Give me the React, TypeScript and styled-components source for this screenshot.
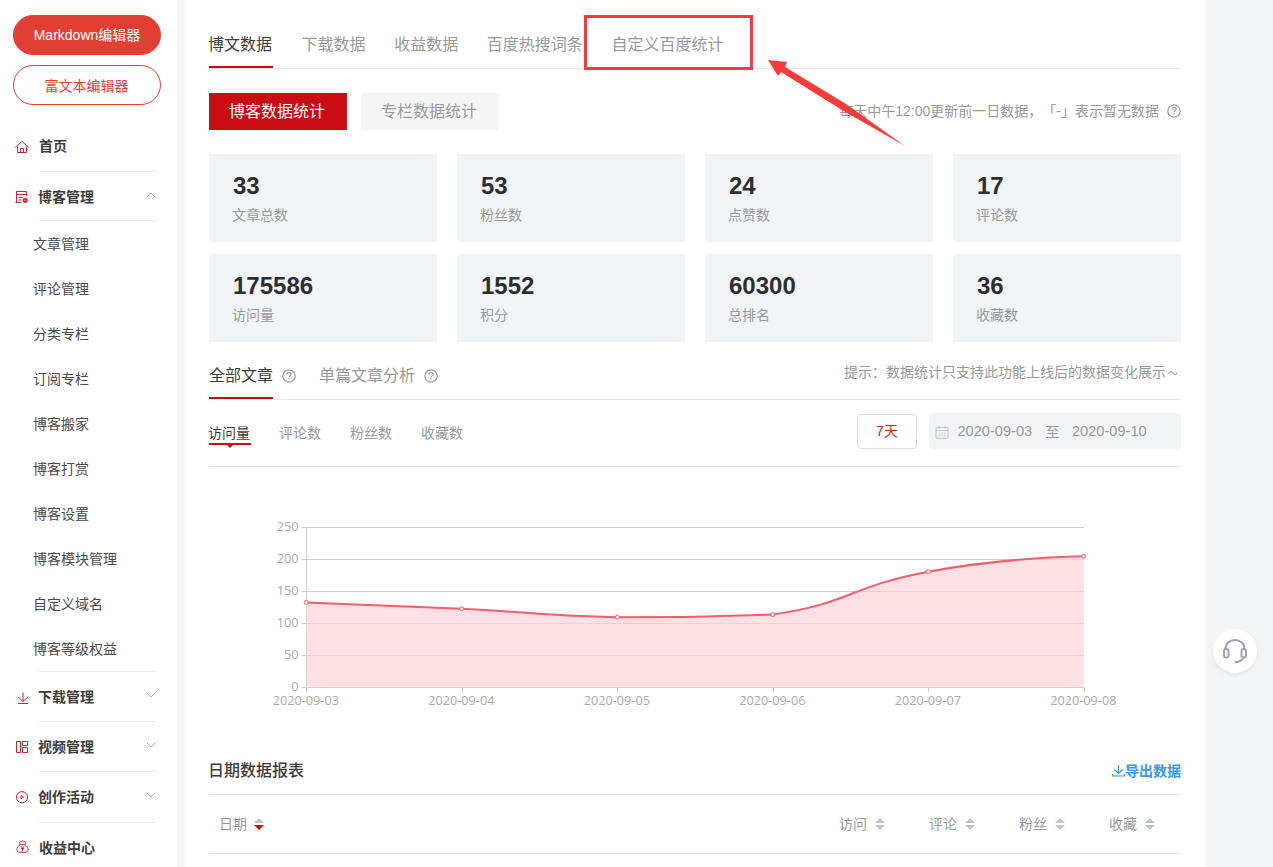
import React from "react";
import styled, { createGlobalStyle } from "styled-components";

const GlobalStyle = createGlobalStyle`
  * { box-sizing: border-box; }
  html, body { margin: 0; height: 100%; overflow: hidden; }
  body {
    background: #f4f5f7;
    color: #3d3d3d;
    font-family: "Liberation Sans", "Noto Sans CJK SC", sans-serif;
    font-size: 14px;
    text-spacing-trim: space-all;
  }
`;

const Page = styled.div`
  position: relative;
  display: flex;
  gap: 8px;
  width: 1273px;
  height: 867px;
  overflow: hidden;
  background: #f4f5f7;
`;

const Sidebar = styled.aside`
  display: flex;
  flex-direction: column;
  flex: none;
  width: 177px;
  padding-top: 15px;
  background: #fff;
`;

const EditorButtons = styled.div`
  display: flex;
  flex-direction: column;
  gap: 10px;
  padding: 0 16px 0 13px;
  margin-bottom: 16px;
`;

const EditorButton = styled.button<{ $filled?: boolean }>`
  height: 40px;
  padding: ${(p) => (p.$filled ? "0" : "1px 1px 0 0")};
  border: 1px solid #e33e33;
  border-radius: 20px;
  background: ${(p) => (p.$filled ? "#e33e33" : "#fff")};
  color: ${(p) => (p.$filled ? "#fff" : "#e33e33")};
  font: 14px/38px "Liberation Sans", "Noto Sans CJK SC", sans-serif;
`;

const MenuRow = styled.div<{ $height: number; $shift?: number }>`
  display: flex;
  flex: none;
  align-items: center;
  height: ${(p) => p.$height}px;
  padding-left: ${(p) => 14 + (p.$shift || 0)}px;
  padding-right: 21px;
`;

const MenuIcon = styled.svg`
  flex: none;
  width: 16px;
  height: 16px;
  margin-left: -1px;
  fill: none;
  stroke: #c9202c;
  stroke-width: 1;
`;

const MenuBody = styled.div<{ $line?: boolean }>`
  display: flex;
  flex: 1;
  align-items: center;
  justify-content: space-between;
  height: 100%;
  margin-left: 10px;
  border-bottom: 1px solid ${(p) => (p.$line === false ? "transparent" : "#ebebeb")};
  font-weight: bold;
  color: #3d3d3d;
  white-space: nowrap;
`;

const MenuLabel = styled.span<{ $raise?: number }>`
  margin-left: -1px;
  padding-bottom: ${(p) => p.$raise || 0}px;
`;

const Chevron = styled.svg<{ $up?: boolean }>`
  width: 10px;
  height: 6px;
  margin-top: ${(p) => (p.$up ? "-2px" : "-4px")};
  fill: none;
  stroke: ${(p) => (p.$up ? "#8fa5bb" : "#a9adb5")};
  transform: ${(p) => (p.$up ? "none" : "rotate(180deg)")};
`;

const SubMenu = styled.div`
  flex: none;
  padding-left: 33px;
`;

const SubItem = styled.div`
  height: 45px;
  line-height: 47px;
  color: #4a4a4a;
`;

const SubMenuEnd = styled.div`
  flex: none;
  height: 1px;
  margin: 0 21px 0 39px;
  background: #ebebeb;
`;

const Main = styled.main`
  display: flex;
  flex-direction: column;
  flex: none;
  width: 1020px;
  padding: 20px 24px 0;
  background: #fff;
`;

const TabBar = styled.div`
  display: flex;
  flex: none;
  gap: 28.6px;
  height: 49px;
  border-bottom: 1px solid #e8e8ea;
`;

const Tab = styled.div<{ $active?: boolean }>`
  height: 48px;
  line-height: 49px;
  font-size: 16px;
  text-indent: ${(p) => (p.$active ? "-1px" : "0")};
  padding-right: ${(p) => (p.$active ? "1px" : "0")};
  color: ${(p) => (p.$active ? "#3d3d3d" : "#999")};
  border-bottom: 2px solid ${(p) => (p.$active ? "#c90d15" : "transparent")};
  white-space: nowrap;
`;

const ModeRow = styled.div`
  display: flex;
  flex: none;
  align-items: center;
  gap: 14px;
  height: 37px;
  margin: 24px 0;
`;

const ModeButton = styled.button<{ $active?: boolean }>`
  width: 138px;
  height: 37px;
  padding: 0 2px 2px 0;
  border: 0;
  background: ${(p) => (p.$active ? "#c90d15" : "#f5f5f6")};
  color: ${(p) => (p.$active ? "#fff" : "#999")};
  font: 16px/35px "Noto Sans CJK SC", sans-serif;
`;

const Note = styled.div`
  display: flex;
  align-items: center;
  gap: 8px;
  margin-left: auto;
  padding-bottom: 1px;
  color: #999;
  line-height: 20px;
  white-space: nowrap;
`;

const Cards = styled.div`
  display: grid;
  flex: none;
  grid-template-columns: repeat(4, 228px);
  grid-auto-rows: 88px;
  gap: 12px 20px;
`;

const Card = styled.div`
  padding: 18px 24px 0;
  background: #f0f4f7;
`;

const CardValue = styled.div`
  height: 28px;
  line-height: 28px;
  font-size: 24px;
  font-weight: bold;
  color: #2e2e2e;
`;

const CardLabel = styled.div`
  height: 30px;
  line-height: 30px;
  text-indent: -1px;
  color: #999;
`;

const ScopeBar = styled.div`
  display: flex;
  flex: none;
  align-items: flex-start;
  height: 58px;
  border-bottom: 1px solid #e8e8ea;
`;

const ScopeTab = styled.div<{ $active?: boolean }>`
  height: 57px;
  padding-top: 10px;
  line-height: 48px;
  font-size: 16px;
  color: ${(p) => (p.$active ? "#3d3d3d" : "#999")};
  border-bottom: 2px solid ${(p) => (p.$active ? "#c90d15" : "transparent")};
`;

const HelpSlot = styled.div`
  display: flex;
  align-items: center;
  height: 68px;
  margin: 0 23px 0 9px;
`;

const ScopeHint = styled.div`
  margin-left: auto;
  padding: 20px 1px 0 0;
  line-height: 20px;
  color: #999;
`;

const Tilde = styled.span`
  display: inline-block;
  width: 14px;
  text-align: center;
  font-size: 10px;
`;

const MetricBar = styled.div`
  display: flex;
  flex: none;
  align-items: flex-start;
  height: 67px;
  padding-top: 13px;
  border-bottom: 1px solid #e8e8ea;
`;

const Metric = styled.div<{ $active?: boolean }>`
  position: relative;
  height: 32px;
  margin-right: 29px;
  padding: 6px 1px 0 0;
  text-indent: -1px;
  line-height: 28px;
  color: ${(p) => (p.$active ? "#3d3d3d" : "#999")};
  border-bottom: 2px solid ${(p) => (p.$active ? "#c90d15" : "transparent")};
`;

const MetricPointer = styled.span`
  position: absolute;
  left: 17px;
  top: 31px;
  border: 4px solid transparent;
  border-top-color: #c90d15;
  border-bottom: 0;
`;

const RangeButton = styled.button`
  width: 60px;
  height: 35px;
  margin: 1px 12px 0 auto;
  padding: 0 0 1px;
  border: 1px solid #dcdee2;
  border-radius: 4px;
  background: #fff;
  color: #ca1b23;
  font: 14px/30px "Liberation Sans", "Noto Sans CJK SC", sans-serif;
`;

const DateRange = styled.div`
  display: flex;
  align-items: center;
  width: 252px;
  height: 36px;
  padding-left: 6px;
  border-radius: 4px;
  background: #f2f4f6;
  color: #999;
  font-size: 14.6px;
  white-space: nowrap;
`;

const DateText = styled.span`
  width: 75px;
  margin-left: 8.5px;
`;

const DateJoin = styled.span`
  margin: 0 4px 0 13px;
  padding-bottom: 1px;
  font-size: 14px;
`;

const CalendarIcon = styled.svg`
  width: 14px;
  height: 14px;
  margin-top: 1px;
  fill: none;
  stroke: #c0c4cc;
`;

const ChartSvg = styled.svg`
  display: block;
  flex: none;
  width: 972px;
  height: 280px;
`;

const AxisText = styled.text`
  font-family: "Open Sans", sans-serif;
  font-size: 12.7px;
  fill: #aaa;
`;

const ReportHead = styled.div`
  display: flex;
  flex: none;
  align-items: center;
  justify-content: space-between;
  height: 48px;
  border-bottom: 1px solid #e8e8ea;
`;

const ReportTitle = styled.div`
  font-size: 16px;
  font-weight: 500;
  line-height: 24px;
  text-indent: -1px;
  color: #3d3d3d;
`;

const ExportLink = styled.a`
  display: flex;
  align-items: center;
  line-height: 20px;
  font-weight: bold;
  color: #3399ea;
`;

const TableHead = styled.div`
  display: flex;
  flex: none;
  height: 59px;
  padding-left: 10px;
  border-bottom: 1px solid #e8e8ea;
  color: #999;
`;

const Column = styled.div<{ $grow?: boolean }>`
  display: flex;
  flex: ${(p) => (p.$grow ? "1" : "none")};
  align-items: center;
  gap: ${(p) => (p.$grow ? "7px" : "8px")};
  width: 90px;
  padding-bottom: 3px;
  &:last-child { width: 72px; }
`;

const SortArrows = styled.svg`
  width: 10px;
  height: 12px;
  margin-top: 2px;
`;

const Support = styled.div`
  position: absolute;
  left: 1213px;
  top: 629px;
  display: flex;
  align-items: center;
  justify-content: center;
  width: 44px;
  height: 44px;
  border-radius: 50%;
  background: #fff;
  box-shadow: 0 2px 5px rgba(0, 0, 0, 0.07);
`;

const Highlight = styled.div`
  position: absolute;
  left: 584px;
  top: 15px;
  width: 169px;
  height: 55px;
  border: 3px solid #fc3a3a;
`;

const Arrow = styled.svg`
  position: absolute;
  left: 768px;
  top: 60px;
  width: 138px;
  height: 87px;
`;

const HelpIcon = () => (
  <svg width="14" height="14" viewBox="0 0 14 14" fill="none" stroke="#999">
    <circle cx="7" cy="7" r="6.2" strokeWidth="1.2" />
    <path d="M5 5.6C5 4.4 5.9 3.7 7 3.7S9 4.4 9 5.4C9 6.7 7 6.7 7 8.3" strokeWidth="1.2" />
    <path d="M7 9.3v1.2" strokeWidth="1.3" />
  </svg>
);

const ChevronIcon = ({ up }: { up?: boolean }) => (
  <Chevron $up={up} viewBox="0 0 10 6">
    <path d="M0.7 5.3L5 1l4.3 4.3" />
  </Chevron>
);

const Sort = ({ down }: { down?: boolean }) => (
  <SortArrows viewBox="0 0 10 12">
    <path d="M0 5L5 0l5 5z" fill="#c0c4cc" />
    <path d="M0 7h10l-5 5z" fill={down ? "#c90d15" : "#c0c4cc"} />
  </SortArrows>
);

const subItems = [
  "文章管理", "评论管理", "分类专栏", "订阅专栏", "博客搬家",
  "博客打赏", "博客设置", "博客模块管理", "自定义域名", "博客等级权益",
];

const cards = [
  ["33", "文章总数"], ["53", "粉丝数"], ["24", "点赞数"], ["17", "评论数"],
  ["175586", "访问量"], ["1552", "积分"], ["60300", "总排名"], ["36", "收藏数"],
];

const days = ["2020-09-03", "2020-09-04", "2020-09-05", "2020-09-06", "2020-09-07", "2020-09-08"];
const visits = [132, 122, 109, 113, 180, 204];

const CHART_LEFT = 97.5;
const CHART_BOTTOM = 220.5;
const STEP = 155.5;
const points = visits.map((v, i) => [CHART_LEFT - 0.3 + i * STEP, CHART_BOTTOM - 0.6 - v * 0.64]);

function smoothPath(pts: number[][]) {
  const ys = pts.map((p) => p[1]);
  const clamp = (y: number) => Math.min(Math.max(y, Math.min(...ys)), Math.max(...ys));
  const slope = (i: number) =>
    i === 0 || i === pts.length - 1 ? null : [(pts[i + 1][0] - pts[i - 1][0]) / 4, (pts[i + 1][1] - pts[i - 1][1]) / 4];
  let d = `M${pts[0].join(" ")}`;
  for (let i = 0; i < pts.length - 1; i++) {
    const a = slope(i) || [0, 0];
    const b = slope(i + 1) || [0, 0];
    d += `C${pts[i][0] + a[0]} ${clamp(pts[i][1] + a[1])} ${pts[i + 1][0] - b[0]} ${clamp(pts[i + 1][1] - b[1])} ${pts[i + 1].join(" ")}`;
  }
  return d;
}

const Chart = () => {
  const line = smoothPath(points);
  const right = CHART_LEFT + STEP * 5;
  return (
    <ChartSvg viewBox="0 0 972 280">
      {[0, 50, 100, 150, 200, 250].map((v) => {
        const y = CHART_BOTTOM - v * 0.64;
        return (
          <g key={v}>
            <path d={`M${CHART_LEFT - 5} ${y}H${right}`} stroke="#ccc" />
            <AxisText x={CHART_LEFT - 8} y={y + 3.2} textAnchor="end">{v}</AxisText>
          </g>
        );
      })}
      <path d={`M${CHART_LEFT} ${CHART_BOTTOM - 160}V${CHART_BOTTOM}`} stroke="#ccc" />
      {days.map((d, i) => (
        <g key={d}>
          <path d={`M${Math.floor(CHART_LEFT + i * STEP) + 0.5} ${CHART_BOTTOM}v5`} stroke="#ccc" />
          <AxisText x={CHART_LEFT - 0.7 + i * STEP} y={CHART_BOTTOM + 17} textAnchor="middle">{d}</AxisText>
        </g>
      ))}
      <path d={`${line}V${CHART_BOTTOM}H${CHART_LEFT}Z`} fill="#ffd0d6" fillOpacity="0.65" />
      <path d={line} fill="none" stroke="#f65c6b" strokeWidth="2" />
      {points.map(([x, y]) => (
        <circle key={x} cx={x} cy={y} r="2" fill="#fff" stroke="#f65c6b" />
      ))}
    </ChartSvg>
  );
};

export default function App() {
  return (
    <>
      <GlobalStyle />
      <Page>
        <Sidebar>
          <EditorButtons>
            <EditorButton $filled>Markdown编辑器</EditorButton>
            <EditorButton>富文本编辑器</EditorButton>
          </EditorButtons>
          <MenuRow $height={51} $shift={1}>
            <MenuIcon viewBox="0 0 16 16">
              <path d="M1.2 8.3L8 2.5l6.8 5.8M3.5 7.5v6h9v-6M6.5 13.5v-4h3v4" />
            </MenuIcon>
            <MenuBody><MenuLabel $raise={2}>首页</MenuLabel></MenuBody>
          </MenuRow>
          <MenuRow $height={49}>
            <MenuIcon viewBox="0 0 16 16">
              <path d="M13.5 7V2.5h-10v11H8M2.5 13.5h6M3.5 5.5h10M5.5 8.5h4M5.5 11h3" />
              <circle cx="12.2" cy="11.2" r="1.6" strokeWidth="1.9" />
            </MenuIcon>
            <MenuBody><MenuLabel>博客管理</MenuLabel><ChevronIcon up /></MenuBody>
          </MenuRow>
          <SubMenu>
            {subItems.map((t) => <SubItem key={t}>{t}</SubItem>)}
          </SubMenu>
          <SubMenuEnd />
          <MenuRow $height={50}>
            <MenuIcon viewBox="0 0 16 16">
              <path d="M10 3.5v9M4.7 7.6L10 12.5l5.3-4.9M5 14.5h10" />
            </MenuIcon>
            <MenuBody><MenuLabel $raise={2}>下载管理</MenuLabel><ChevronIcon /></MenuBody>
          </MenuRow>
          <MenuRow $height={50}>
            <MenuIcon viewBox="0 0 16 16">
              <path d="M3.5 2.5h4v11h-4zM9.5 2.5h5v4h-5zM9.5 8.5h5v5h-5z" />
            </MenuIcon>
            <MenuBody><MenuLabel $raise={2}>视频管理</MenuLabel><ChevronIcon /></MenuBody>
          </MenuRow>
          <MenuRow $height={51}>
            <MenuIcon viewBox="0 0 16 16">
              <circle cx="9" cy="7.2" r="5.6" />
              <path d="M8 5.4l2.6 1.8L8 9z" />
            </MenuIcon>
            <MenuBody><MenuLabel $raise={2}>创作活动</MenuLabel><ChevronIcon /></MenuBody>
          </MenuRow>
          <MenuRow $height={50} $shift={1}>
            <MenuIcon viewBox="0 0 16 16">
              <path d="M6.2 4.7C5 3 5.8 1 8.5 1s3.5 2 2.3 3.7M6.2 4.7h4.6M6.2 4.7C2 7 2 12.2 5.2 12.2h6.6C15 12.2 15 7 10.8 4.7M6.8 6.2l1.7 2 1.7-2M8.5 8v3M7 8.5h3" />
            </MenuIcon>
            <MenuBody $line={false}><MenuLabel $raise={2}>收益中心</MenuLabel></MenuBody>
          </MenuRow>
        </Sidebar>

        <Main>
          <TabBar>
            <Tab $active>博文数据</Tab>
            <Tab>下载数据</Tab>
            <Tab>收益数据</Tab>
            <Tab>百度热搜词条</Tab>
            <Tab>自定义百度统计</Tab>
          </TabBar>
          <ModeRow>
            <ModeButton $active>博客数据统计</ModeButton>
            <ModeButton>专栏数据统计</ModeButton>
            <Note>每天中午12:00更新前一日数据，「-」表示暂无数据<HelpIcon /></Note>
          </ModeRow>
          <Cards>
            {cards.map(([value, label]) => (
              <Card key={label}>
                <CardValue>{value}</CardValue>
                <CardLabel>{label}</CardLabel>
              </Card>
            ))}
          </Cards>
          <ScopeBar>
            <ScopeTab $active>全部文章</ScopeTab>
            <HelpSlot><HelpIcon /></HelpSlot>
            <ScopeTab>单篇文章分析</ScopeTab>
            <HelpSlot><HelpIcon /></HelpSlot>
            <ScopeHint>提示：数据统计只支持此功能上线后的数据变化展示<Tilde>～</Tilde></ScopeHint>
          </ScopeBar>
          <MetricBar>
            <Metric $active>访问量<MetricPointer /></Metric>
            <Metric>评论数</Metric>
            <Metric>粉丝数</Metric>
            <Metric>收藏数</Metric>
            <RangeButton>7天</RangeButton>
            <DateRange>
              <CalendarIcon viewBox="0 0 14 14">
                <path d="M1 2.5h12v10.8H1zM1 5.5h12M4 .8v3M10 .8v3" />
                <path d="M3.5 8.2h7M3.5 10.7h7" strokeDasharray="1.6 1.1" />
              </CalendarIcon>
              <DateText>2020-09-03</DateText>
              <DateJoin>至</DateJoin>
              <DateText>2020-09-10</DateText>
            </DateRange>
          </MetricBar>
          <Chart />
          <ReportHead>
            <ReportTitle>日期数据报表</ReportTitle>
            <ExportLink>
              <svg width="13" height="13" viewBox="0 0 13 13" fill="none" stroke="#3399ea" strokeWidth="1.2">
                <path d="M6.5 1v8.5M2.3 5.5l4.2 4 4.2-4M.7 10v2h11.6v-2" />
              </svg>
              导出数据
            </ExportLink>
          </ReportHead>
          <TableHead>
            <Column $grow>日期<Sort down /></Column>
            <Column>访问<Sort /></Column>
            <Column>评论<Sort /></Column>
            <Column>粉丝<Sort /></Column>
            <Column>收藏<Sort /></Column>
          </TableHead>
        </Main>

        <Support>
          <svg width="26" height="26" viewBox="0 0 26 26" fill="none" stroke="#a0a1b5" strokeWidth="2">
            <path d="M3.5 11C3.5 5.5 7.5 2 13 2s9.5 3.5 9.5 9" />
            <rect x="2" y="11" width="4.5" height="8.5" rx="2" />
            <rect x="19.5" y="11" width="4.5" height="8.5" rx="2" />
            <path d="M21.5 19.5c-1.5 3-4.5 4.7-9 4.7" />
          </svg>
        </Support>
        <Highlight />
        <Arrow viewBox="0 0 138 87">
          <path d="M0 0L19 2l-2 5L78 44l59 42-63-36L13 12l-3 4z" fill="#fc3a3a" />
        </Arrow>
      </Page>
    </>
  );
}
